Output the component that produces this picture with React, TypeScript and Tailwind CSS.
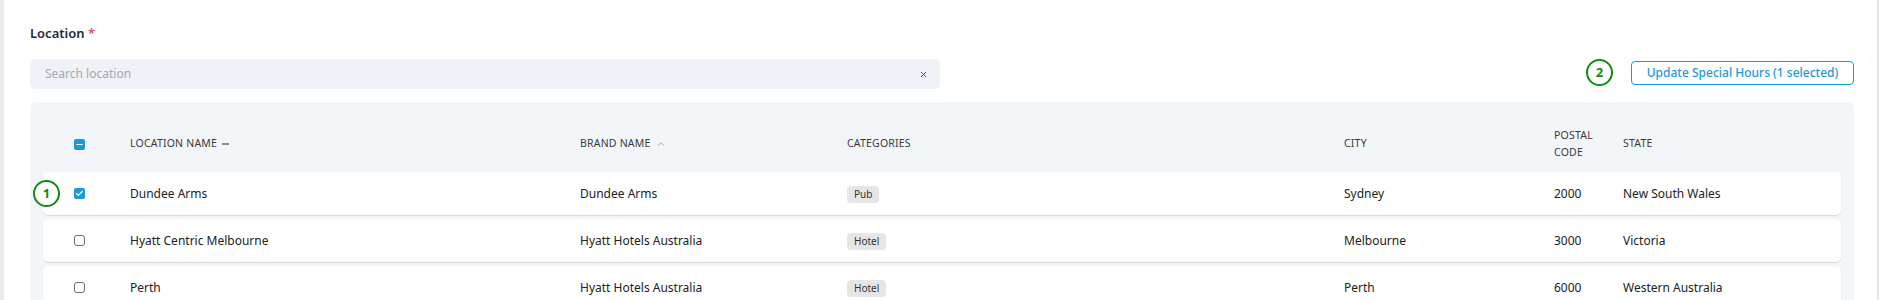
import { Check, ChevronUp, Minus, X } from "lucide-react";

type Loc = {
  name: string;
  brand: string;
  category: string;
  city: string;
  postal: string;
  state: string;
  selected?: boolean;
};

const rows: Loc[] = [
  { name: "Dundee Arms", brand: "Dundee Arms", category: "Pub", city: "Sydney", postal: "2000", state: "New South Wales", selected: true },
  { name: "Hyatt Centric Melbourne", brand: "Hyatt Hotels Australia", category: "Hotel", city: "Melbourne", postal: "3000", state: "Victoria" },
  { name: "Perth", brand: "Hyatt Hotels Australia", category: "Hotel", city: "Perth", postal: "6000", state: "Western Australia" },
];

const gridCols = "grid grid-cols-[56px_450px_267px_497px_210px_69px_1fr] items-center pl-[31px]";

function Marker({ n }: { n: number }) {
  return (
    <div className="w-[27px] h-[27px] rounded-full border-[2.5px] border-[#138a13] flex items-center justify-center text-[13px] font-bold text-[#138a13] bg-white leading-none">
      {n}
    </div>
  );
}

function Box({ state }: { state: "on" | "off" | "some" }) {
  if (state === "off") {
    return <div className="w-[11px] h-[11px] rounded-[3px] border border-[#6b6b6b] bg-white" />;
  }
  return (
    <div className="w-[11px] h-[11px] rounded-[2px] bg-[#1a9ad6] flex items-center justify-center">
      {state === "on" ? (
        <Check size={9} strokeWidth={3} className="text-white" />
      ) : (
        <Minus size={9} strokeWidth={3} className="text-white" />
      )}
    </div>
  );
}

export default function App() {
  return (
    <div
      className="h-[300px] overflow-hidden bg-white border-l-4 border-l-[#ececec] border-r-2 border-r-[#e6e6e6] text-[#2b2b2b]"
      style={{ fontFamily: '"Noto Sans", "Open Sans", sans-serif' }}
    >
      <div className="pl-[26px] pr-[23px]">
        <div className="pt-[24px] h-[59px] text-[13px] font-semibold text-[#1f2a37]">
          Location <span className="text-[#e0457b]">*</span>
        </div>

        <div className="flex items-start">
          <div className="w-[910px] h-[30px] rounded-[5px] bg-[#eff2f7] flex items-center justify-between pl-[15px] pr-[12px]">
            <span className="text-[12px] text-[#a3a9b3]">Search location</span>
            <X size={9} strokeWidth={2.5} className="text-[#3b4660]" />
          </div>
          <div className="ml-auto flex items-center gap-[18px]">
            <Marker n={2} />
            <button className="h-[24px] w-[223px] rounded-[4px] border border-[#1a9ad6] text-[12px] font-medium text-[#1a9ad6] flex items-center justify-center">
              Update Special Hours (1 selected)
            </button>
          </div>
        </div>

        <div className="mt-[13px] bg-[#f3f6f9] rounded-[6px] px-[13px]">
          <div className={`${gridCols} h-[70px] pt-[14px] text-[10.5px] uppercase text-[#3a3a3a] tracking-[0.2px]`}>
            <Box state="some" />
            <div className="flex items-center gap-[5px]">
              LOCATION NAME <span className="w-[7px] h-[1.5px] bg-[#8a8a8a]" />
            </div>
            <div className="flex items-center gap-[5px]">
              BRAND NAME <ChevronUp size={10} strokeWidth={1.8} className="text-[#8a8a8a]" />
            </div>
            <div>CATEGORIES</div>
            <div>CITY</div>
            <div className="leading-[17px] -mt-[1px]">
              POSTAL
              <br />
              CODE
            </div>
            <div>STATE</div>
          </div>

          <div className="flex flex-col gap-[4px]">
            {rows.map((r) => (
              <div
                key={r.name}
                className={`${gridCols} relative h-[43px] bg-white rounded-[5px] shadow-[0_1px_1px_rgba(0,0,0,0.12)] text-[12px] text-[#222]`}
              >
                {r.selected && (
                  <div className="absolute left-[-10px] top-[8px]">
                    <Marker n={1} />
                  </div>
                )}
                <Box state={r.selected ? "on" : "off"} />
                <div>{r.name}</div>
                <div>{r.brand}</div>
                <div>
                  <span className="inline-block rounded-[4px] bg-[#e6e6e6] px-[7px] py-[1px] text-[10px] text-[#333]">
                    {r.category}
                  </span>
                </div>
                <div>{r.city}</div>
                <div>{r.postal}</div>
                <div>{r.state}</div>
              </div>
            ))}
          </div>
        </div>
      </div>
    </div>
  );
}
